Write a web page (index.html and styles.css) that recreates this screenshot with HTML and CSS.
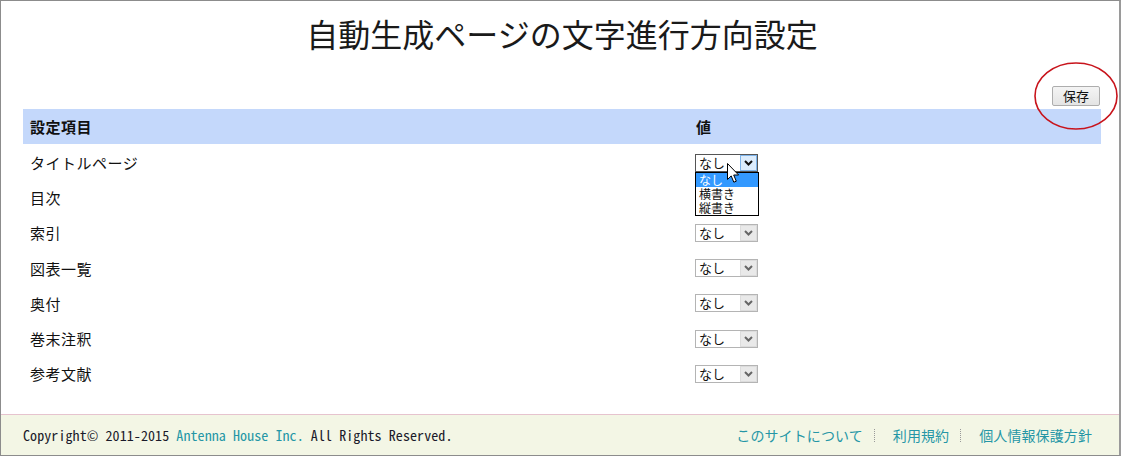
FILE: index.html
```html
<!DOCTYPE html>
<html lang="ja">
<head>
    <meta charset="UTF-8">
    <meta name="viewport" content="width=device-width, initial-scale=1.0">
    <title>自動生成ページの文字進行方向設定</title>
    <link rel="stylesheet" href="styles.css">
</head>
<body>
    <div class="page">
        <main class="content">
            <h1 class="title">自動生成ページの文字進行方向設定</h1>

            <div class="toolbar">
                <span class="save-wrap">
                    <button type="button" class="save-button">保存</button>
                    <!-- red circle drawn over the save button -->
                    <svg class="mark" width="84" height="68" viewBox="0 0 84 68">
                        <ellipse cx="42" cy="34" rx="41" ry="33" fill="none" stroke="#c8141c" stroke-width="1.6"/>
                    </svg>
                </span>
            </div>

            <div class="settings">
                <div class="settings-head">
                    <span>設定項目</span>
                    <span>値</span>
                </div>

                <div class="settings-row">
                    <span>タイトルページ</span>
                    <span class="select is-open">
                        <span class="select-value">なし</span>
                        <span class="select-button">
                            <svg width="9" height="6" viewBox="0 0 9 6"><path d="M1 1 L4.5 4.5 L8 1" fill="none" stroke="#111" stroke-width="2"/></svg>
                        </span>
                        <span class="select-list">
                            <span class="option is-active">なし</span>
                            <span class="option">横書き</span>
                            <span class="option">縦書き</span>
                        </span>
                        <svg class="cursor" width="13" height="21" viewBox="0 0 13 21">
                            <path d="M0.5 0.5 L0.5 16.5 L4.2 12.9 L6.8 19.2 L9.3 18.2 L6.7 12 L11.6 12 Z" fill="#fff" stroke="#000" stroke-width="1" stroke-linejoin="miter"/>
                        </svg>
                    </span>
                </div>

                <div class="settings-row">
                    <span>目次</span>
                    <span class="select">
                        <span class="select-value">なし</span>
                        <span class="select-button">
                            <svg width="9" height="6" viewBox="0 0 9 6"><path d="M1 1 L4.5 4.5 L8 1" fill="none" stroke="#666" stroke-width="2"/></svg>
                        </span>
                    </span>
                </div>

                <div class="settings-row">
                    <span>索引</span>
                    <span class="select">
                        <span class="select-value">なし</span>
                        <span class="select-button">
                            <svg width="9" height="6" viewBox="0 0 9 6"><path d="M1 1 L4.5 4.5 L8 1" fill="none" stroke="#666" stroke-width="2"/></svg>
                        </span>
                    </span>
                </div>

                <div class="settings-row">
                    <span>図表一覧</span>
                    <span class="select">
                        <span class="select-value">なし</span>
                        <span class="select-button">
                            <svg width="9" height="6" viewBox="0 0 9 6"><path d="M1 1 L4.5 4.5 L8 1" fill="none" stroke="#666" stroke-width="2"/></svg>
                        </span>
                    </span>
                </div>

                <div class="settings-row">
                    <span>奥付</span>
                    <span class="select">
                        <span class="select-value">なし</span>
                        <span class="select-button">
                            <svg width="9" height="6" viewBox="0 0 9 6"><path d="M1 1 L4.5 4.5 L8 1" fill="none" stroke="#666" stroke-width="2"/></svg>
                        </span>
                    </span>
                </div>

                <div class="settings-row">
                    <span>巻末注釈</span>
                    <span class="select">
                        <span class="select-value">なし</span>
                        <span class="select-button">
                            <svg width="9" height="6" viewBox="0 0 9 6"><path d="M1 1 L4.5 4.5 L8 1" fill="none" stroke="#666" stroke-width="2"/></svg>
                        </span>
                    </span>
                </div>

                <div class="settings-row">
                    <span>参考文献</span>
                    <span class="select">
                        <span class="select-value">なし</span>
                        <span class="select-button">
                            <svg width="9" height="6" viewBox="0 0 9 6"><path d="M1 1 L4.5 4.5 L8 1" fill="none" stroke="#666" stroke-width="2"/></svg>
                        </span>
                    </span>
                </div>
            </div>
        </main>

        <footer class="footer">
            <p class="copyright">Copyright© 2011-2015 <a href="#">Antenna House Inc.</a> All Rights Reserved.</p>
            <ul class="footer-links">
                <li><a href="#">このサイトについて</a></li>
                <li><a href="#">利用規約</a></li>
                <li><a href="#">個人情報保護方針</a></li>
            </ul>
        </footer>
    </div>
</body>
</html>
```

FILE: styles.css
```css
body {
    margin: 0;
    background-color: #fff;
    font-family: "Noto Sans CJK JP", "Noto Sans", sans-serif;
    color: #111;
}

.page {
    box-sizing: border-box;
    width: 1121px;
    height: 456px;
    border: 1px solid #8c8c8c;
    border-right: 2px solid #9a9a9a;
    display: flex;
    flex-direction: column;
}

.content {
    flex: 1;
    padding: 0 18px 0 22px;
}

.title {
    margin: 0;
    padding-top: 15px;
    font-size: 32px;
    line-height: 34px;
    font-weight: normal;
    text-align: center;
    color: #1a1a1a;
}

.toolbar {
    display: flex;
    justify-content: flex-end;
    margin-top: 36px;
    margin-bottom: 3px;
    padding-right: 1px;
}

.save-wrap {
    position: relative;
    display: inline-block;
}

.save-button {
    display: block;
    width: 48px;
    height: 20px;
    padding: 0;
    border: 1px solid #adadad;
    border-radius: 2px;
    background: linear-gradient(#f4f4f4, #e4e4e4);
    font-family: "Noto Sans CJK JP", sans-serif;
    font-size: 13px;
    line-height: 18px;
    color: #111;
}

.mark {
    position: absolute;
    left: -18px;
    top: -24px;
    pointer-events: none;
}

.settings-head {
    display: grid;
    grid-template-columns: 666px 1fr;
    align-items: center;
    height: 35px;
    padding-left: 7px;
    background-color: #c4d8fb;
    font-size: 15px;
    font-weight: bold;
    letter-spacing: 0.5px;
}

.settings-row {
    box-sizing: border-box;
    display: grid;
    grid-template-columns: 665px 1fr;
    align-items: center;
    height: 35.2px;
    padding: 2px 0 0 7px;
    font-size: 15px;
    letter-spacing: 0.5px;
}

/* drawn select box */
.select {
    position: relative;
    box-sizing: border-box;
    display: flex;
    width: 63px;
    height: 18px;
    border: 1px solid #b4b4b4;
    background-color: #fff;
    font-size: 13px;
    line-height: 16px;
    letter-spacing: 0;
}

.select-value {
    flex: 1;
    padding-left: 3px;
}

.select-button {
    box-sizing: border-box;
    display: flex;
    align-items: center;
    justify-content: center;
    width: 17px;
    border: 1px solid #dcdcdc;
    background-color: #e9e9e9;
}

.select.is-open {
    border-color: #555;
}

.select.is-open .select-button {
    border-color: #7eb4ea;
    background-color: #dcecfc;
}

.select-list {
    position: absolute;
    left: -1px;
    top: 17px;
    box-sizing: border-box;
    width: 64px;
    border: 1px solid #000;
    background-color: #fff;
    z-index: 2;
}

.option {
    display: block;
    height: 14px;
    padding-left: 3px;
    font-size: 12px;
    line-height: 14px;
}

.option.is-active {
    background-color: #3399ff;
    color: #fff;
}

.cursor {
    position: absolute;
    left: 31px;
    top: 8px;
    z-index: 3;
}

.footer {
    box-sizing: border-box;
    height: 41px;
    border-top: 1px solid #e6c3ce;
    background-color: #f3f6e5;
    display: flex;
    align-items: center;
    justify-content: space-between;
    padding: 0 18px 0 22px;
}

.footer a {
    color: #2596a6;
    text-decoration: none;
}

.copyright {
    margin: 0;
    font-family: "Noto Sans Mono CJK JP", "Liberation Mono", monospace;
    font-size: 14px;
    letter-spacing: 0.08px;
    color: #1a1a2a;
}

.footer-links {
    display: flex;
    list-style: none;
    margin: 0;
    padding: 0;
    font-size: 14px;
    letter-spacing: 0.1px;
}

.footer-links li {
    padding: 0 11px 0 18px;
    line-height: 13px;
}

.footer-links li + li {
    border-left: 1px dotted #999;
}

.footer-links li:last-child {
    padding-right: 9px;
}
```
